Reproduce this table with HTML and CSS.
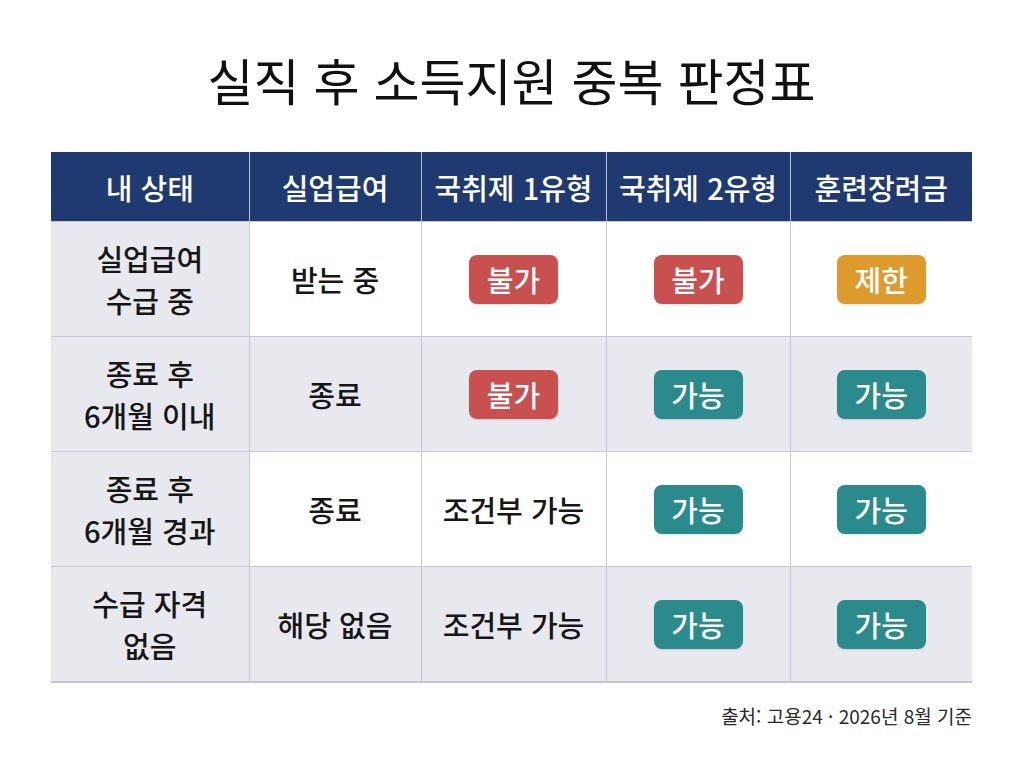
FILE: index.html
```html
<!DOCTYPE html>
<html lang="ko">
<head>
<meta charset="utf-8">
<title>실직 후 소득지원 중복 판정표</title>
<link rel="stylesheet" href="styles.css">
</head>
<body>
<main class="page">
  <h1 class="title">실직 후 소득지원 중복 판정표</h1>
  <table class="grid">
    <colgroup>
      <col class="c1"><col class="c2"><col class="c3"><col class="c4"><col class="c5">
    </colgroup>
    <thead>
      <tr>
        <th>내 상태</th>
        <th>실업급여</th>
        <th>국취제 1유형</th>
        <th>국취제 2유형</th>
        <th>훈련장려금</th>
      </tr>
    </thead>
    <tbody>
      <tr class="row-white">
        <td class="state">실업급여<br>수급 중</td>
        <td>받는 중</td>
        <td><span class="badge no">불가</span></td>
        <td><span class="badge no">불가</span></td>
        <td><span class="badge limit">제한</span></td>
      </tr>
      <tr class="row-gray">
        <td class="state">종료 후<br>6개월 이내</td>
        <td>종료</td>
        <td><span class="badge no">불가</span></td>
        <td><span class="badge ok">가능</span></td>
        <td><span class="badge ok">가능</span></td>
      </tr>
      <tr class="row-white">
        <td class="state">종료 후<br>6개월 경과</td>
        <td>종료</td>
        <td>조건부 가능</td>
        <td><span class="badge ok">가능</span></td>
        <td><span class="badge ok">가능</span></td>
      </tr>
      <tr class="row-gray">
        <td class="state">수급 자격<br>없음</td>
        <td>해당 없음</td>
        <td>조건부 가능</td>
        <td><span class="badge ok">가능</span></td>
        <td><span class="badge ok">가능</span></td>
      </tr>
    </tbody>
  </table>
  <p class="source">출처: 고용24 · 2026년 8월 기준</p>
</main>
</body>
</html>
```

FILE: styles.css
```css
html, body {
  margin: 0;
  padding: 0;
  background: #ffffff;
}

body {
  font-family: "Noto Sans CJK KR", "Noto Sans", sans-serif;
  color: #1a1a1a;
}

.page {
  width: 921px;
  margin: 0 auto 0 51px;
  padding-top: 49px;
}

.title {
  margin: 0;
  font-size: 50px;
  line-height: 60px;
  font-weight: 400;
  text-align: center;
  color: #111111;
  letter-spacing: 0;
}

.grid {
  margin-top: 43px;
  width: 921px;
  border-collapse: collapse;
  table-layout: fixed;
}

.c1 { width: 198px; }
.c2 { width: 172px; }
.c3 { width: 185px; }
.c4 { width: 184px; }
.c5 { width: 182px; }

.grid th {
  height: 69px;
  padding: 0;
  background: #1f3a70;
  color: #ffffff;
  font-size: 29px;
  font-weight: 500;
  text-align: center;
  vertical-align: middle;
  border-left: 1px solid #b9c1d3;
}

.grid th:first-child {
  border-left: none;
}

.grid td {
  height: 114px;
  padding: 0;
  font-size: 29px;
  line-height: 42px;
  font-weight: 500;
  text-align: center;
  vertical-align: middle;
  color: #161616;
  border: 1px solid #c2c8d6;
}

.grid td:first-child {
  border-left: none;
}

.grid td:last-child {
  border-right: none;
}

.grid tbody tr:last-child td {
  border-bottom: 2px solid #c3c8d4;
}

.row-white td {
  background: #ffffff;
}

.row-gray td,
.grid td.state {
  background: #e8e9ef;
}

.badge {
  display: inline-flex;
  align-items: center;
  justify-content: center;
  width: 89px;
  height: 49px;
  border-radius: 8px;
  color: #ffffff;
  font-size: 29px;
  font-weight: 500;
  line-height: 1;
  vertical-align: middle;
  box-shadow: 0 1px 2px rgba(0, 0, 0, 0.12);
}

.badge.no {
  background: #c8504f;
}

.badge.limit {
  background: #de9b2d;
}

.badge.ok {
  background: #2b8a8b;
}

.source {
  margin: 21px 0 0;
  text-align: right;
  font-size: 19px;
  line-height: 24px;
  color: #2a2a2a;
  font-weight: 400;
}
```
